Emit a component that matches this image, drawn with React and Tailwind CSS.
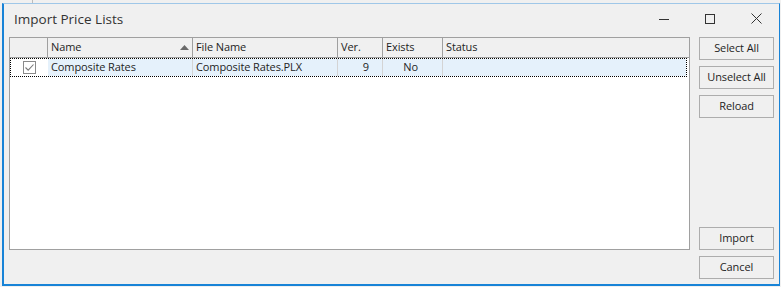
import React from "react";

const font = { fontFamily: '"Open Sans","Noto Sans",sans-serif' };

function Btn({ children }) {
  return (
    <div className="w-[75px] h-[23px] border border-[#adadad] bg-[#f0f0f0] flex items-center justify-center text-[11px] tracking-[-0.1px] text-[#1e1e1e]">
      {children}
    </div>
  );
}

function Check() {
  return (
    <div className="w-[13px] h-[13px] border border-[#8a8a8a] bg-white flex items-center justify-center">
      <svg width="11" height="11" viewBox="0 0 11 11">
        <path d="M1.5 5.5 L4.2 8.2 L9.5 2.5" fill="none" stroke="#7a7a7a" strokeWidth="1.1" />
      </svg>
    </div>
  );
}

export default function App() {
  const cols = [
    { w: 38 },
    { w: 145, t: "Name" },
    { w: 145, t: "File Name" },
    { w: 45, t: "Ver." },
    { w: 60, t: "Exists" },
    { w: 246, t: "Status" },
  ];
  return (
    <div className="w-[781px] h-[287px] bg-[#f0f0f0] overflow-hidden relative" style={font}>
      <div className="absolute left-[32px] top-0 w-px h-[3px] bg-[#bcbcbc]" />
      <div className="ml-[2px] mt-[3px] w-[778px] h-[283px] border-l-2 border-r border-b-2 border-t border-[#1883d7] border-t-[#9fc7e8] bg-[#f0f0f0] flex flex-col">
        <div className="h-[33px] flex items-start shrink-0">
          <div className="pl-[10px] pt-[5px] text-[13.5px] leading-[20px] text-[#333333] flex-1">Import Price Lists</div>
          <div className="flex">
            <div className="w-[46px] h-[29px] flex items-center justify-center">
              <svg width="10" height="10" viewBox="0 0 10 10"><path d="M0 5.5 H10" stroke="#333" strokeWidth="1" /></svg>
            </div>
            <div className="w-[46px] h-[29px] flex items-center justify-center">
              <svg width="10" height="10" viewBox="0 0 10 10"><rect x="0.5" y="0.5" width="9" height="9" fill="none" stroke="#333" strokeWidth="1" /></svg>
            </div>
            <div className="w-[46px] h-[29px] flex items-center justify-center">
              <svg width="11" height="11" viewBox="0 0 11 11"><path d="M0.5 0.5 L10.5 10.5 M10.5 0.5 L0.5 10.5" stroke="#333" strokeWidth="1" /></svg>
            </div>
          </div>
        </div>
        <div className="flex items-start pl-[5px] gap-[9px]">
          <div className="w-[681px] h-[213px] border border-[#a0a0a0] bg-white flex flex-col">
            <div className="h-[20px] flex border-b border-[#a0a0a0] bg-[#f0f0f0] text-[11px] tracking-[-0.1px] text-[#1e1e1e]">
              {cols.map((c, i) => (
                <div
                  key={i}
                  className={`h-full flex items-center pl-[3px] ${i < cols.length - 1 ? "border-r border-[#a0a0a0]" : ""}`}
                  style={{ width: c.w, flex: i === cols.length - 1 ? 1 : undefined }}
                >
                  <span className="flex-1">{c.t}</span>
                  {i === 1 && (
                    <svg width="9" height="5" viewBox="0 0 9 5" className="mr-[3px]">
                      <path d="M0 5 L4.5 0 L9 5 Z" fill="#6a6a6a" />
                    </svg>
                  )}
                </div>
              ))}
            </div>
            <div className="h-[19px] flex text-[11px] tracking-[-0.1px] text-[#1e1e1e] border border-dotted border-black mr-[2px]">
              <div className="w-[37px] bg-white flex items-center justify-center">
                <Check />
              </div>
              <div className="w-[145px] bg-[#e5f1fb] flex items-center pl-[3px] border-r border-[#d4d4d4]">Composite Rates</div>
              <div className="w-[145px] bg-[#e5f1fb] flex items-center pl-[3px] border-r border-[#d4d4d4]">Composite Rates.PLX</div>
              <div className="w-[45px] bg-[#e5f1fb] flex items-center justify-end pr-[13px] border-r border-[#d4d4d4]">9</div>
              <div className="w-[60px] bg-[#e5f1fb] flex items-center justify-end pr-[24px] border-r border-[#d4d4d4]">No</div>
              <div className="flex-1 bg-[#e5f1fb]"></div>
            </div>
          </div>
          <div className="h-[242px] flex flex-col justify-between">
            <div className="flex flex-col gap-[6px]">
              <Btn>Select All</Btn>
              <Btn>Unselect All</Btn>
              <Btn>Reload</Btn>
            </div>
            <div className="flex flex-col gap-[6px]">
              <Btn>Import</Btn>
              <Btn>Cancel</Btn>
            </div>
          </div>
        </div>
      </div>
    </div>
  );
}
